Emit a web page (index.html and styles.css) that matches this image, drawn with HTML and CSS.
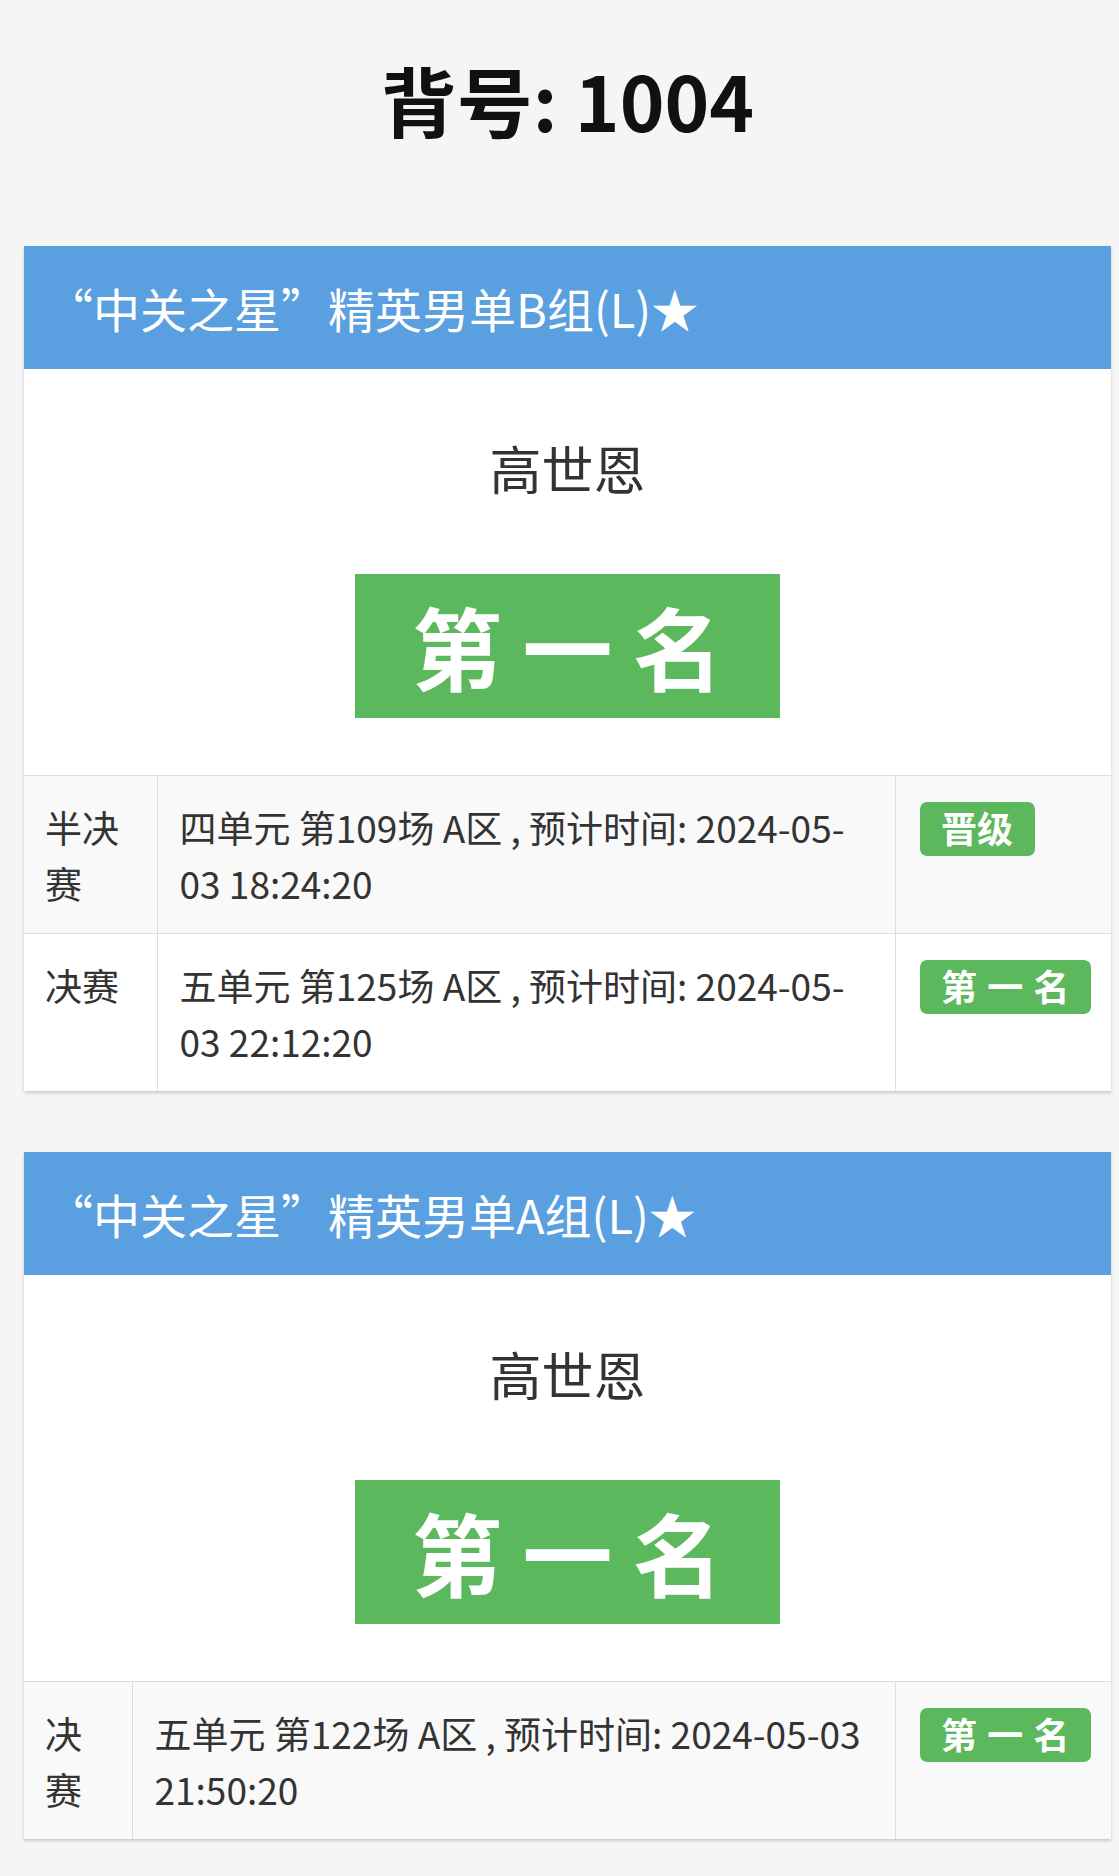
FILE: index.html
```html
<!DOCTYPE html>
<html lang="zh-CN">
<head>
<meta charset="utf-8">
<title>背号: 1004</title>
<link rel="stylesheet" href="styles.css">
</head>
<body>
<div class="page">
  <h1 class="title">背号: 1004</h1>

  <div class="card">
    <div class="card-head">“中关之星”精英男单B组(L)★</div>
    <div class="card-body">
      <div class="player">高世恩</div>
      <div class="rank"><span class="label label-big">第 一 名</span></div>
    </div>
    <table class="rounds">
      <colgroup><col class="col-stage-wide"><col><col class="col-result"></colgroup>
      <tr class="odd">
        <td>半决赛</td>
        <td>四单元 第109场 A区 , 预计时间: 2024-05-<wbr>03 18:24:20</td>
        <td><span class="label">晋级</span></td>
      </tr>
      <tr>
        <td>决赛</td>
        <td>五单元 第125场 A区 , 预计时间: 2024-05-<wbr>03 22:12:20</td>
        <td><span class="label">第 一 名</span></td>
      </tr>
    </table>
  </div>

  <div class="card">
    <div class="card-head">“中关之星”精英男单A组(L)★</div>
    <div class="card-body">
      <div class="player">高世恩</div>
      <div class="rank"><span class="label label-big">第 一 名</span></div>
    </div>
    <table class="rounds">
      <colgroup><col class="col-stage-narrow"><col><col class="col-result"></colgroup>
      <tr class="odd">
        <td>决赛</td>
        <td>五单元 第122场 A区 , 预计时间: 2024-05-<wbr>03 21:50:20</td>
        <td><span class="label">第 一 名</span></td>
      </tr>
    </table>
  </div>
</div>
</body>
</html>
```

FILE: styles.css
```css
html, body {
  margin: 0;
  padding: 0;
  background: #f5f5f5;
}

body {
  font-family: "Noto Sans CJK SC", "Noto Sans", sans-serif;
  color: #333;
}

.page {
  padding: 0 8px 35px 24px;
}

.title {
  margin: 0;
  padding: 54px 0 101px;
  font-size: 76px;
  line-height: 91px;
  font-weight: 700;
  color: #111;
  text-align: center;
}

.card {
  background: #fff;
  box-shadow: 0 2px 3px rgba(0, 0, 0, 0.18);
  margin-bottom: 61px;
}

.card:last-child {
  margin-bottom: 0;
}

.card-head {
  background: #5a9fe0;
  color: #fff;
  font-size: 47px;
  line-height: 56px;
  padding: 34px 22px 33px;
  white-space: nowrap;
}

.card-body {
  background: #fff;
  padding: 68px 0 57px;
  display: flex;
  flex-direction: column;
  align-items: center;
}

.player {
  font-size: 52px;
  line-height: 62px;
  color: #333;
}

.rank {
  margin-top: 75px;
  display: flex;
  justify-content: center;
}

.label {
  display: inline-block;
  background: #5cb85c;
  color: #fff;
  font-weight: 700;
  font-size: 36px;
  line-height: 1;
  padding: 0.2em 0.6em 0.3em;
  border-radius: 0.2em;
  white-space: nowrap;
  word-spacing: 2px;
  vertical-align: top;
  margin-top: 3px;
}

.label-big {
  display: block;
  font-size: 90px;
  word-spacing: 0;
  padding: 26px 57px 28px;
  border-radius: 0;
  margin-top: 0;
}

.rounds {
  width: 100%;
  border-collapse: collapse;
  table-layout: fixed;
  font-size: 37px;
  line-height: 56px;
  color: #333;
}

.col-stage-wide { width: 133px; }
.col-stage-narrow { width: 108px; }
.col-result { width: 216px; }

.rounds td {
  vertical-align: top;
  padding: 23px 22px 22px;
  border-top: 1px solid #dddddd;
  border-left: 1px solid #dddddd;
}

.rounds td:first-child {
  border-left: none;
  padding-left: 21px;
  padding-right: 16px;
}

.rounds td:last-child {
  padding-left: 24px;
  padding-right: 8px;
}

.rounds tr.odd td {
  background: #f9f9f9;
}
```
